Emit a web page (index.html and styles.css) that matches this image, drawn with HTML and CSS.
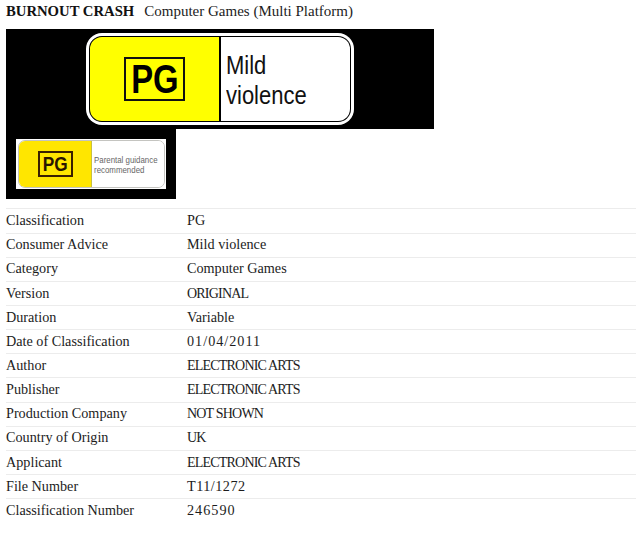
FILE: index.html
```html
<!DOCTYPE html>
<html lang="en">
<head>
<meta charset="utf-8">
<title>Burnout Crash</title>
<link rel="stylesheet" href="styles.css">
</head>
<body>
<h1 class="title"><strong class="name">BURNOUT CRASH</strong><span class="kind">Computer Games (Multi Platform)</span></h1>
<div class="banner">
  <div class="badge">
    <div class="badge-left"><span class="pg"><span class="pg-text">PG</span></span></div>
    <div class="badge-right"><span class="advice">Mild<br>violence</span></div>
  </div>
</div>
<div class="small-wrap">
  <div class="small-white">
    <div class="small-badge">
      <div class="small-left"><span class="small-pg"><span class="small-pg-text">PG</span></span></div>
      <div class="small-right"><span class="small-note">Parental guidance<br>recommended</span></div>
    </div>
  </div>
</div>
<dl class="details">
  <div class="row"><dt>Classification</dt><dd>PG</dd></div>
  <div class="row"><dt>Consumer Advice</dt><dd>Mild violence</dd></div>
  <div class="row"><dt>Category</dt><dd>Computer Games</dd></div>
  <div class="row"><dt>Version</dt><dd class="caps">ORIGINAL</dd></div>
  <div class="row"><dt>Duration</dt><dd>Variable</dd></div>
  <div class="row"><dt>Date of Classification</dt><dd class="num">01/04/2011</dd></div>
  <div class="row"><dt>Author</dt><dd class="caps">ELECTRONIC ARTS</dd></div>
  <div class="row"><dt>Publisher</dt><dd class="caps">ELECTRONIC ARTS</dd></div>
  <div class="row"><dt>Production Company</dt><dd class="caps">NOT SHOWN</dd></div>
  <div class="row"><dt>Country of Origin</dt><dd class="caps">UK</dd></div>
  <div class="row"><dt>Applicant</dt><dd class="caps">ELECTRONIC ARTS</dd></div>
  <div class="row"><dt>File Number</dt><dd class="num num-tight">T11/1272</dd></div>
  <div class="row"><dt>Classification Number</dt><dd class="num">246590</dd></div>
</dl>
</body>
</html>
```
FILE: styles.css
```css
html, body { margin: 0; padding: 0; background: #fff; }
body {
  width: 640px;
  height: 535px;
  overflow: hidden;
  padding: 0 4px 0 6px;
  box-sizing: border-box;
  font-family: "Liberation Serif", "DejaVu Serif", serif;
  color: #1c1c1c;
}
.title {
  margin: 0;
  height: 29px;
  box-sizing: border-box;
  padding-top: 3px;
  font-size: 15px;
  line-height: 17px;
  font-weight: normal;
  display: flex;
  gap: 10px;
}
.name { font-weight: bold; color: #111; font-size: 14.7px; }
.banner {
  width: 428px;
  height: 100px;
  background: #000;
  display: flex;
  box-sizing: border-box;
  padding: 4px 0 4px 80px;
}
.badge {
  width: 268px;
  height: 92px;
  box-sizing: border-box;
  display: flex;
  background: #fff;
  border-radius: 16px;
  padding: 3px;
}
.badge-left {
  flex: none;
  width: 129px;
  background: #ffff00;
  border: 1px solid #000;
  border-right: 2px solid #000;
  border-radius: 13px 0 0 13px;
  display: flex;
  align-items: center;
  justify-content: center;
}
.pg {
  width: 57px;
  height: 40px;
  border: 2px solid #111;
  display: flex;
  align-items: center;
  justify-content: center;
}
.pg-text {
  display: block;
  transform: scaleX(0.82);
  font: bold 40px/40px "Liberation Sans", sans-serif;
  color: #000;
}
.badge-right {
  flex: 1;
  min-width: 0;
  border: 1px solid #000;
  border-left: 0;
  border-radius: 0 13px 13px 0;
  box-sizing: border-box;
  padding: 13px 0 0 5px;
}
.advice {
  display: block;
  white-space: nowrap;
  transform: scaleX(0.88);
  transform-origin: 0 0;
  font: 25px/30px "Liberation Sans", sans-serif;
  color: #111;
}
.small-wrap {
  width: 170px;
  height: 70px;
  background: #000;
  box-sizing: border-box;
  padding: 10px;
}
.small-white {
  width: 150px;
  height: 50px;
  background: #fff;
  box-sizing: border-box;
  padding: 1px 1px 1px 2px;
}
.small-badge {
  height: 48px;
  display: flex;
  box-sizing: border-box;
  border: 1px solid #c4c4c0;
  border-radius: 7px;
  overflow: hidden;
}
.small-left {
  flex: none;
  width: 72px;
  background: #ffe600;
  border-right: 1px solid #c8c040;
  display: flex;
  align-items: center;
  justify-content: center;
}
.small-pg {
  width: 31px;
  height: 22px;
  border: 2px solid #3a2000;
  display: flex;
  align-items: center;
  justify-content: center;
}
.small-pg-text {
  display: block;
  transform: scaleX(0.82);
  font: bold 21px/22px "Liberation Sans", sans-serif;
  color: #2a1500;
}
.small-right {
  flex: 1;
  min-width: 0;
  padding: 14px 0 0 2px;
  background: #fff;
}
.small-note {
  display: block;
  white-space: nowrap;
  transform: scaleX(0.83);
  transform-origin: 0 0;
  font: 9.5px/9.5px "Liberation Sans", sans-serif;
  color: #666;
}
.details {
  margin: 9.4px 0 0;
  display: grid;
  grid-auto-rows: 24.17px;
}
.row {
  display: grid;
  grid-template-columns: 181px 1fr;
  align-items: center;
  border-top: 1px solid #ececec;
  box-sizing: border-box;
  padding-bottom: 0.86px;
  font-size: 14.2px;
  line-height: 17px;
}
dt, dd { margin: 0; }
.caps { font-size: 14px; letter-spacing: -0.8px; }
.num { letter-spacing: 1px; }
.num-tight { letter-spacing: 0.5px; }
```
